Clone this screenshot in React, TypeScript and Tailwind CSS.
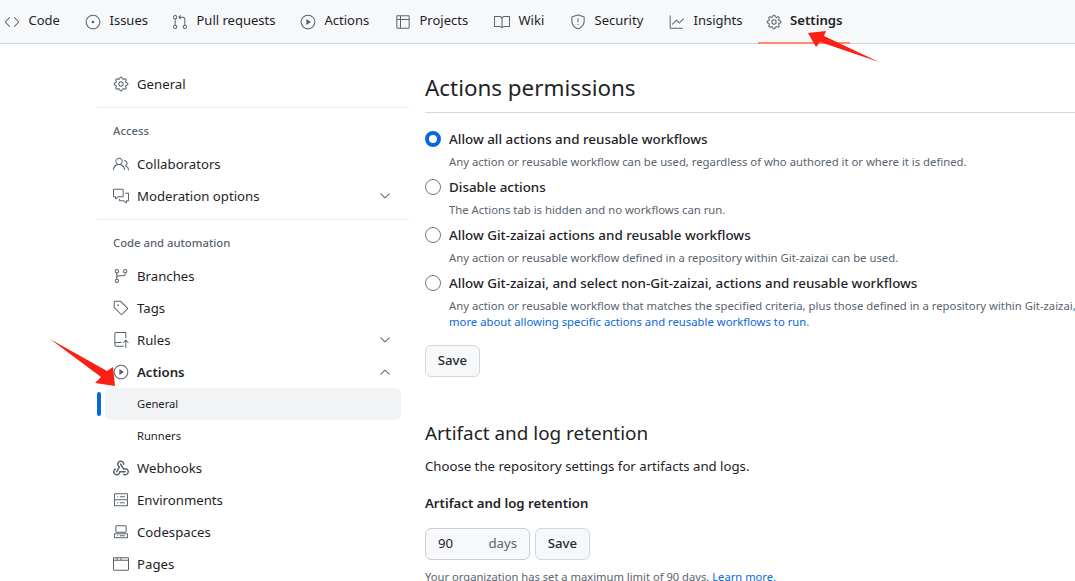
import React from 'react';
import {
  GoBook, GoBrowser, GoChevronDown, GoChevronUp, GoCode, GoCodespaces, GoCommentDiscussion, GoGear,
  GoGitBranch, GoGitPullRequest, GoGraph, GoIssueOpened, GoPeople, GoPlay, GoRepoPush, GoServer,
  GoShield, GoTable, GoTag,
} from 'react-icons/go';

const GoWebhookIcon = ({ size, className }: { size?: number; className?: string }) => (
  <svg width={size} height={size} viewBox="0 0 16 16" fill="currentColor" className={className}>
    <path d="M5.5 4.25a2.25 2.25 0 0 1 4.5 0 .75.75 0 0 0 1.5 0 3.75 3.75 0 1 0-6.14 2.889l-2.272 4.258a.75.75 0 0 0 1.324.706L7 7.25a.75.75 0 0 0-.309-1.015A2.25 2.25 0 0 1 5.5 4.25Z" />
    <path d="M7.364 3.607a.75.75 0 0 1 1.03.257l2.608 4.349a3.75 3.75 0 1 1-.628 6.785.75.75 0 0 1 .752-1.299 2.25 2.25 0 1 0-.033-3.88.75.75 0 0 1-1.03-.256L7.107 4.636a.75.75 0 0 1 .257-1.03Z" />
    <path d="M2.9 8.776A.75.75 0 0 1 2.625 9.8 2.25 2.25 0 1 0 6 11.75a.75.75 0 0 1 .75-.751h5.5a.75.75 0 0 1 0 1.5H7.425a3.751 3.751 0 1 1-5.55-3.998.75.75 0 0 1 1.024.274Z" />
  </svg>
);

const tabs = [
  { label: 'Code', icon: GoCode, w: 'w-[81px]' },
  { label: 'Issues', icon: GoIssueOpened, w: 'w-[87px]' },
  { label: 'Pull requests', icon: GoGitPullRequest, w: 'w-[128px]' },
  { label: 'Actions', icon: GoPlay, w: 'w-[95px]' },
  { label: 'Projects', icon: GoTable, w: 'w-[99px]' },
  { label: 'Wiki', icon: GoBook, w: 'w-[76px]' },
  { label: 'Security', icon: GoShield, w: 'w-[99px]' },
  { label: 'Insights', icon: GoGraph, w: 'w-[97px]' },
];

const Row = ({ icon: Icon, label, chevron, bold }: { icon: any; label: string; chevron?: 'up' | 'down'; bold?: boolean }) => (
  <div className="h-8 mx-2 px-2 flex items-center gap-2 text-[#1f2328]">
    <Icon size={16} className="text-[#59636e] shrink-0" />
    <span className={`pt-[2px] ${bold ? 'font-semibold' : ''}`}>{label}</span>
    {chevron === 'down' && <GoChevronDown size={16} className="ml-auto text-[#59636e]" />}
    {chevron === 'up' && <GoChevronUp size={16} className="ml-auto text-[#59636e]" />}
  </div>
);

const SubRow = ({ label, active }: { label: string; active?: boolean }) => (
  <div className="relative h-8">
    {active && <div className="absolute left-0 top-1 w-1 h-6 rounded-full bg-[#0969da]" />}
    <div className={`h-8 mx-2 pl-8 rounded-md flex items-center text-[11.2px] text-[#1f2328] ${active ? 'bg-[#f2f3f5]' : ''}`}>{label}</div>
  </div>
);

const Option = ({ label, checked, children }: { label: string; checked?: boolean; children: React.ReactNode }) => (
  <div className="flex gap-2">
    {checked ? (
      <div className="w-4 h-4 mt-1 shrink-0 rounded-full border-[4px] border-[#0969da] bg-white" />
    ) : (
      <div className="w-4 h-4 mt-1 shrink-0 rounded-full border border-[#6e7781] bg-white" />
    )}
    <div>
      <div className="h-6 leading-6 text-[13.4px] font-medium text-[#1f2328] whitespace-nowrap">{label}</div>
      <div className="mt-[3px] pb-[5px] text-[11.3px] leading-4 text-[#59636e] whitespace-nowrap">{children}</div>
    </div>
  </div>
);

const SaveButton = () => (
  <button className="w-[55px] h-8 rounded-md border border-[#d1d9e0] bg-[#f6f8fa] font-medium text-[#25292e]">Save</button>
);

export default function App() {
  return (
    <div className="relative w-[1075px] h-[581px] overflow-hidden bg-white text-[13.2px] font-['Noto_Sans','Open_Sans',sans-serif]">
      <header className="h-[44px] bg-[#f6f8fa] border-b border-[#d1d9e0] flex pl-1 text-[#1f2328]">
        {tabs.map(({ label, icon: Icon, w }) => (
          <div key={label} className={`${w} h-[43px] flex items-center gap-[8.5px] shrink-0 text-[13px]`}>
            <Icon size={16} className="text-[#59636e] shrink-0" />
            <span className="pb-[2px]">{label}</span>
          </div>
        ))}
        <div className="h-[43px] flex items-center gap-2 font-semibold">
          <GoGear size={16} className="text-[#59636e]" />
          <span className="pb-[2px]">Settings</span>
        </div>
      </header>
      <div className="absolute left-[758px] top-[42px] w-[92px] h-[2px] bg-[#fd8c73]" />

      <div className="flex pl-[97px]">
        <aside className="w-[312px] shrink-0 pt-6">
          <Row icon={GoGear} label="General" />
          <div className="mt-[7px] border-t border-[#e6eaef]" />
          <div className="h-[40px] pl-4 pt-[15px] text-[11.3px] leading-4 font-medium text-[#59636e]">Access</div>
          <Row icon={GoPeople} label="Collaborators" />
          <Row icon={GoCommentDiscussion} label="Moderation options" chevron="down" />
          <div className="mt-[7px] border-t border-[#e6eaef]" />
          <div className="h-[40px] pl-4 pt-[15px] text-[11.3px] leading-4 font-medium text-[#59636e]">Code and automation</div>
          <Row icon={GoGitBranch} label="Branches" />
          <Row icon={GoTag} label="Tags" />
          <Row icon={GoRepoPush} label="Rules" chevron="down" />
          <Row icon={GoPlay} label="Actions" chevron="up" bold />
          <SubRow label="General" active />
          <SubRow label="Runners" />
          <Row icon={GoWebhookIcon} label="Webhooks" />
          <Row icon={GoServer} label="Environments" />
          <Row icon={GoCodespaces} label="Codespaces" />
          <Row icon={GoBrowser} label="Pages" />
        </aside>

        <main className="ml-4 flex-1 min-w-0 pt-[24px]">
          <h2 className="h-[45px] border-b border-[#d1d9e0] text-[22.4px] leading-[39px] font-normal text-[#1f2328]">Actions permissions</h2>
          <div className="mt-[14px]">
            <Option label="Allow all actions and reusable workflows" checked>
              Any action or reusable workflow can be used, regardless of who authored it or where it is defined.
            </Option>
            <Option label="Disable actions">The Actions tab is hidden and no workflows can run.</Option>
            <Option label="Allow Git-zaizai actions and reusable workflows">
              Any action or reusable workflow defined in a repository within Git-zaizai can be used.
            </Option>
            <Option label="Allow Git-zaizai, and select non-Git-zaizai, actions and reusable workflows">
              Any action or reusable workflow that matches the specified criteria, plus those defined in a repository within Git-zaizai,
              <div className="text-[#0969da]">more about allowing specific actions and reusable workflows to run.</div>
            </Option>
          </div>
          <div className="mt-[10px]"><SaveButton /></div>

          <h3 className="mt-[40px] h-8 text-[18.9px] leading-8 font-normal text-[#1f2328]">Artifact and log retention</h3>
          <p className="mt-[7px] leading-5 text-[#1f2328]">Choose the repository settings for artifacts and logs.</p>
          <div className="mt-[17px] leading-5 font-semibold text-[#1f2328]">Artifact and log retention</div>
          <div className="mt-[15px] flex gap-[5px]">
            <div className="w-[105px] h-8 px-3 rounded-md border border-[#c8ced6] bg-[#f6f8fa] flex items-center justify-between text-[#1f2328]">
              <span>90</span>
              <span className="text-[#59636e]">days</span>
            </div>
            <SaveButton />
          </div>
          <p className="mt-[9px] text-[11.2px] leading-4 text-[#59636e] whitespace-nowrap">
            Your organization has set a maximum limit of 90 days. <span className="text-[#0969da]">Learn more.</span>
          </p>
        </main>
      </div>

      {/* annotation arrows drawn on top of the screenshot */}
      <svg className="absolute inset-0 pointer-events-none" width="1075" height="581">
        <polygon points="808,33 826,31 824,36 879,62 820,42 816,47" fill="#fb1f14" />
        <polygon points="115,386 95,383 101,377 50,339 107,371 113,367" fill="#fb1f14" />
      </svg>
    </div>
  );
}
